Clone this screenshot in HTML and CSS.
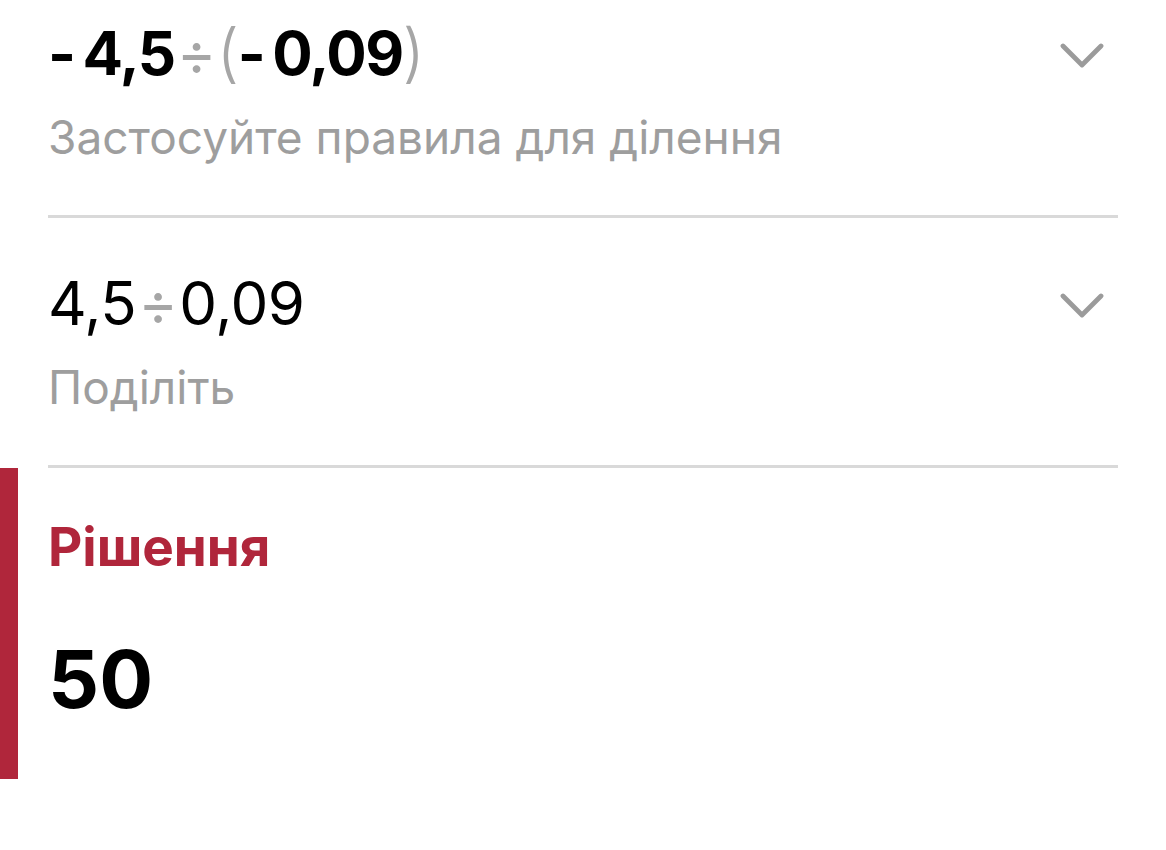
FILE: index.html
```html
<!DOCTYPE html>
<html lang="uk">
<head>
<meta charset="utf-8">
<link rel="stylesheet" href="styles.css">
</head>
<body>
<div class="steps">
  <div class="step step-first">
    <div class="step-text">
      <div class="expr bold"><span class="minus">-</span>4,5<span class="op">÷</span><span class="paren">(</span><span class="minus">-</span>0,09<span class="paren">)</span></div>
      <div class="hint">Застосуйте правила для ділення</div>
    </div>
    <svg class="chevron" width="44" height="28" viewBox="0 0 44 28"><polyline points="3,3 22,22 41,3" fill="none" stroke="#9b9b9b" stroke-width="4.8" stroke-linecap="round" stroke-linejoin="round"/></svg>
  </div>
  <div class="step">
    <div class="step-text">
      <div class="expr">4,5<span class="op">÷</span>0,09</div>
      <div class="hint">Поділіть</div>
    </div>
    <svg class="chevron" width="44" height="28" viewBox="0 0 44 28"><polyline points="3,3 22,22 41,3" fill="none" stroke="#9b9b9b" stroke-width="4.8" stroke-linecap="round" stroke-linejoin="round"/></svg>
  </div>
</div>
<div class="solution">
  <div class="solution-title">Рішення</div>
  <div class="solution-value">50</div>
</div>
</body>
</html>
```
FILE: styles.css
```css
html, body {
  margin: 0;
  padding: 0;
  background: #ffffff;
}
body {
  font-family: Inter, "Noto Sans", "Liberation Sans", sans-serif;
  color: #000;
  width: 1166px;
  height: 850px;
  overflow: hidden;
}
.steps {
  padding: 0 48px;
}
.step {
  display: flex;
  justify-content: space-between;
  align-items: flex-start;
  border-bottom: 3px solid #d9d9d9;
  height: 198px;
  padding-top: 49px;
}
.step-first {
  height: 198px;
  padding-top: 17px;
}
.expr {
  font-size: 60px;
  line-height: 72px;
  font-weight: 400;
  letter-spacing: -0.5px;
}
.expr.bold {
  font-weight: 700;
  letter-spacing: -1.5px;
}
.minus {
  margin-right: 8px;
}
.op {
  color: #a6a6a6;
  font-weight: 400;
  margin: 0 2px;
}
.paren {
  color: #a6a6a6;
  font-weight: 300;
  font-size: 64px;
  line-height: 1;
}
.hint {
  margin-top: 20px;
  font-size: 46px;
  line-height: 56px;
  color: #9e9e9e;
  letter-spacing: 0;
}
.chevron {
  margin-top: 26px;
  margin-right: 14px;
}
.solution {
  border-left: 18px solid #b0263b;
  height: 311px;
  padding-left: 30px;
  box-sizing: border-box;
  padding-top: 47px;
}
.solution-title {
  font-size: 53px;
  line-height: 64px;
  font-weight: 700;
  color: #b0263b;
}
.solution-value {
  margin-top: 52px;
  font-size: 80px;
  line-height: 96px;
  font-weight: 700;
}
```
